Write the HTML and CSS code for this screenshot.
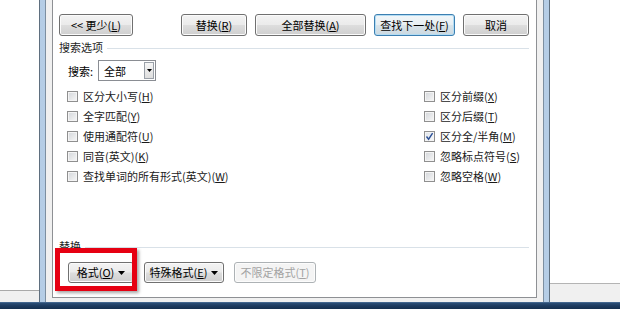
FILE: index.html
```html
<!DOCTYPE html>
<html lang="zh-CN">
<head>
<meta charset="utf-8">
<title>查找和替换</title>
<link rel="stylesheet" href="styles.css">
</head>
<body>
<div class="screen">
  <div class="desk">
    <div class="bgwin bgwin-left"><div class="bg-fill"></div><div class="bg-bar"></div></div>
    <div class="window">
      <div class="wbody">
        <div class="panel">
          <div class="btnrow">
            <button class="btn w-less">&lt;&lt; 更少(<u>L</u>)</button>
            <div class="btngroup">
              <button class="btn w-rep">替换(<u>R</u>)</button>
              <button class="btn w-all">全部替换(<u>A</u>)</button>
              <button class="btn btn-default w-next">查找下一处(<u>F</u>)</button>
              <button class="btn w-cancel">取消</button>
            </div>
          </div>

          <div class="section"><span class="section-label">搜索选项</span><span class="rule"></span></div>

          <div class="searchrow">
            <span class="search-label">搜索:</span>
            <div class="combo"><span class="combo-text">全部</span><span class="combo-btn"><svg width="5" height="3" viewBox="0 0 5 3"><path d="M0 0H5L2.5 3Z" fill="#000"/></svg></span></div>
          </div>

          <div class="checks">
            <label class="chk"><span class="box"></span><span class="txt">区分大小写(<u>H</u>)</span></label>
            <label class="chk"><span class="box"></span><span class="txt">区分前缀(<u>X</u>)</span></label>
            <label class="chk"><span class="box"></span><span class="txt">全字匹配(<u>Y</u>)</span></label>
            <label class="chk"><span class="box"></span><span class="txt">区分后缀(<u>T</u>)</span></label>
            <label class="chk"><span class="box"></span><span class="txt">使用通配符(<u>U</u>)</span></label>
            <label class="chk"><span class="box checked"><svg width="9" height="9" viewBox="0 0 9 9"><path d="M1.5 4.5L3.6 7.2L7.6 1.2" fill="none" stroke="#2b4f95" stroke-width="1.4"/></svg></span><span class="txt">区分全/半角(<u>M</u>)</span></label>
            <label class="chk"><span class="box"></span><span class="txt">同音(英文)(<u>K</u>)</span></label>
            <label class="chk"><span class="box"></span><span class="txt">忽略标点符号(<u>S</u>)</span></label>
            <label class="chk"><span class="box"></span><span class="txt">查找单词的所有形式(英文)(<u>W</u>)</span></label>
            <label class="chk"><span class="box"></span><span class="txt">忽略空格(<u>W</u>)</span></label>
          </div>

          <div class="section section-replace"><span class="section-label">替换</span><span class="rule"></span></div>

          <div class="fmtrow">
            <button class="btn fbtn w-fmt">格式(<u>O</u>) <svg class="caret" width="7" height="4" viewBox="0 0 7 4"><path d="M0 0H7L3.5 4Z" fill="#000"/></svg></button>
            <button class="btn fbtn w-special">特殊格式(<u>E</u>) <svg class="caret" width="7" height="4" viewBox="0 0 7 4"><path d="M0 0H7L3.5 4Z" fill="#000"/></svg></button>
            <button class="btn fbtn btn-disabled w-nofmt" disabled>不限定格式(<u>T</u>)</button>
          </div>

          <div class="highlight"></div>
        </div>
      </div>
    </div>
    <div class="bgwin bgwin-right"><div class="bg-fill"></div><div class="bg-bar bg-bar-tall"></div></div>
  </div>
  <div class="taskbar"></div>
</div>
</body>
</html>
```

FILE: styles.css
```css
* { box-sizing: border-box; }
html, body { margin: 0; padding: 0; background: #fff; }
body {
  font-family: "Noto Sans CJK SC", "Noto Sans", sans-serif;
  font-size: 11px;
  color: #000;
}
.screen { width: 620px; height: 309px; overflow: hidden; display: flex; flex-direction: column; }
.desk { height: 302px; display: flex; }

.bgwin { display: flex; flex-direction: column; background: #fff; }
.bgwin-left { width: 39px; }
.bgwin-right { flex: 1; }
.bg-fill { flex: 1; }
.bg-bar { height: 12px; border-top: 1px solid #a9a9a9; background: #f0f0f0; }
.bg-bar-tall { height: 19px; border-top: 1px solid #b4b4b4; }

.window {
  width: 511px;
  border-left: 1px solid #5f6f7f;
  border-right: 1px solid #5f6f7f;
  padding: 0 5px;
  background: linear-gradient(90deg, #b5cde6, #cfe0f2 50%, #b5cde6);
  display: flex;
}
.wbody {
  flex: 1;
  border-left: 1px solid #7d8fa1;
  border-right: 1px solid #7d8fa1;
  background: #f0f0f0;
  padding: 0 6px 4px 6px;
  display: flex;
}
.panel {
  position: relative;
  flex: 1;
  background: #fff;
  border: 1px solid #8e9094;
  border-top: none;
  display: flex;
  flex-direction: column;
}

.btn {
  font-family: inherit;
  font-size: 11px;
  color: #000;
  height: 22px;
  padding: 0;
  border: 1px solid #707070;
  border-radius: 3px;
  background: linear-gradient(#f3f3f3 0%, #ebebeb 48%, #dddddd 52%, #cfcfcf 100%);
  box-shadow: inset 0 0 0 1px #fbfbfb;
  display: inline-flex;
  align-items: center;
  justify-content: center;
  line-height: 1;
}
.btn u, .txt u { text-decoration: underline; text-underline-offset: 1px; }
.btn-default {
  border-color: #3c7fb1;
  box-shadow: inset 0 0 0 1px #b3dcf3;
  background: linear-gradient(#f1f6f9 0%, #e8eff3 48%, #d9e4ea 52%, #cbd8e0 100%);
}
.btn-disabled {
  color: #a3a3a3;
  border-color: #adb2b5;
  background: #f4f4f4;
  box-shadow: inset 0 0 0 1px #fcfcfc;
}

.btnrow {
  margin-top: 14px;
  padding: 0 7px 0 6px;
  display: flex;
  justify-content: space-between;
}
.btngroup { display: flex; gap: 8px; }
.w-less { width: 74px; }
.w-rep { width: 66px; }
.w-all { width: 111px; }
.w-next { width: 81px; }
.w-cancel { width: 66px; }

.section {
  margin-top: 5px;
  height: 13px;
  padding: 0 7px 0 6px;
  display: flex;
  align-items: center;
  gap: 4px;
  line-height: 13px;
  color: #1e1e1e;
}
.rule { flex: 1; height: 1px; background: #d9e1e8; margin-top: 1px; }
.section-replace { margin-top: 54px; }

.searchrow {
  margin-top: 6px;
  padding-left: 15px;
  display: flex;
  align-items: center;
  height: 21px;
}
.search-label { width: 30px; }
.combo {
  width: 58px;
  height: 21px;
  border: 1px solid #8a8d93;
  background: #fff;
  display: flex;
  align-items: center;
  padding: 1px;
}
.combo-text { flex: 1; padding-left: 4px; }
.combo-btn {
  width: 10px;
  height: 17px;
  border: 1px solid #9aa0a8;
  background: linear-gradient(#f6f6f6, #dedede);
  display: flex;
  align-items: center;
  justify-content: center;
}

.checks {
  margin-top: 5px;
  padding-left: 14px;
  display: grid;
  grid-template-columns: 357px auto;
  grid-auto-rows: 20px;
}
.chk { display: flex; align-items: center; gap: 5px; white-space: nowrap; color: #1a1a1a; }
.box {
  width: 11px;
  height: 11px;
  border: 1px solid #8f8f8f;
  background: linear-gradient(135deg, #d3d6da, #f7f7f7);
  box-shadow: inset 0 0 0 1px #f4f4f4;
  display: flex;
  align-items: center;
  justify-content: center;
  flex: none;
}
.box.checked { background: linear-gradient(135deg, #dde3ea, #f8f9fa); }

.fmtrow {
  margin-top: 9px;
  padding-left: 15px;
  display: flex;
  gap: 10px;
}
.fbtn { height: 21px; }
.caret { margin-left: 4px; }
.w-fmt { width: 66px; }
.w-special { width: 80px; }
.w-nofmt { width: 82px; }

.highlight {
  position: absolute;
  left: 2px;
  top: 248px;
  width: 82px;
  height: 43px;
  border: 5px solid #e60012;
  box-shadow: 2px 2px 3px rgba(0,0,0,0.35);
  pointer-events: none;
}

.taskbar {
  height: 7px;
  background: linear-gradient(#5a7ea6 0, #2b4e76 1px, #1c3a5e 4px, #15304f 100%);
}
```
